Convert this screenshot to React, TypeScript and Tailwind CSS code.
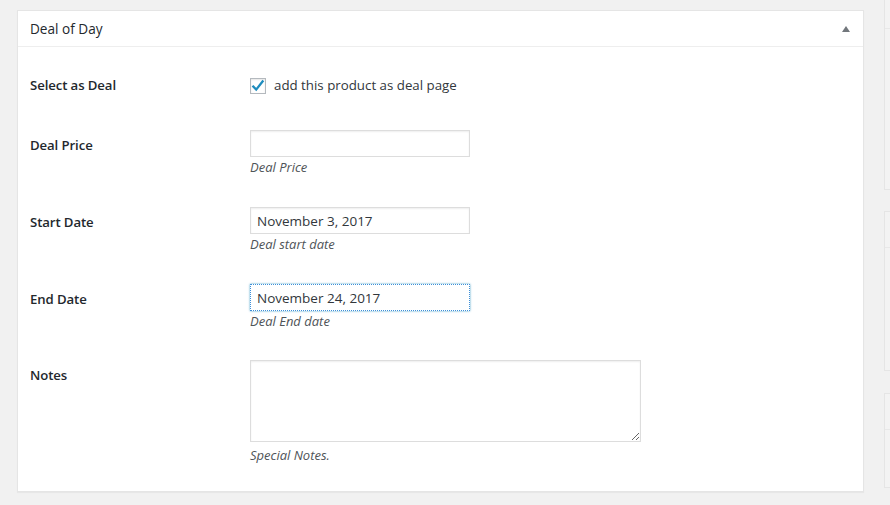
import React from "react";

const font = { fontFamily: '"Open Sans", "Noto Sans", Arial, sans-serif' };

function Row({ label, children, className = "", labelPad = "pt-[5px]" }: { label: string; children: React.ReactNode; className?: string; labelPad?: string }) {
  return (
    <div className={`flex ${className}`}>
      <div className={`w-[220px] shrink-0 text-[13.2px] tracking-[-0.1px] leading-[20px] font-semibold text-[#23282d] ${labelPad}`}>{label}</div>
      <div className="flex flex-col">{children}</div>
    </div>
  );
}

function Desc({ children, className = "" }: { children: React.ReactNode; className?: string }) {
  return <p className={`text-[13px] leading-[20px] italic text-[#4f5458] ${className}`}>{children}</p>;
}

export default function App() {
  return (
    <div style={font} className="w-[890px] h-[505px] overflow-hidden bg-[#f1f1f1] flex">
      <div className="ml-[17px] mt-[10px] w-[847px] h-[482px] shrink-0 bg-white border border-[#e5e5e5] shadow-[0_1px_1px_rgba(0,0,0,0.04)] flex flex-col">
        <div className="h-[36px] border-b border-[#eeeeee] flex items-center justify-between pl-[12px] pr-[13px] shrink-0">
          <h2 className="text-[13.6px] leading-[20px] text-[#23282d] font-normal">Deal of Day</h2>
          <svg width="8" height="6" viewBox="0 0 8 6" className="mt-[1px]">
            <path d="M4 0 L8 6 L0 6 Z" fill="#72777c" />
          </svg>
        </div>
        <div className="pl-[12px] pt-[28px] flex flex-col">
          <Row label="Select as Deal" labelPad="pt-0">
            <label className="flex items-center h-[20px] gap-[8px] text-[13.3px] text-[#32373c]">
              <span className="w-[16px] h-[16px] mt-[1px] border border-[#b4b9be] bg-white shadow-[inset_0_1px_2px_rgba(0,0,0,0.1)] flex items-center justify-center">
                <svg width="14" height="14" viewBox="0 0 14 14">
                  <path d="M2.3 7.6 L5.2 10.6 L11.6 2.4" stroke="#1e8cbe" strokeWidth="2.3" fill="none" strokeLinecap="square" />
                </svg>
              </span>
              <span className="mt-[2px]">add this product as deal page</span>
            </label>
          </Row>
          <Row label="Deal Price" className="mt-[35px]">
            <input readOnly value="" className="w-[220px] h-[27px] border border-[#dddddd] shadow-[inset_0_1px_2px_rgba(0,0,0,0.07)] px-[6px] text-[13.5px] text-[#32373c] outline-none" />
            <Desc>Deal Price</Desc>
          </Row>
          <Row label="Start Date" className="mt-[30px]">
            <input readOnly value="November 3, 2017" className="w-[220px] h-[27px] border border-[#dddddd] shadow-[inset_0_1px_2px_rgba(0,0,0,0.07)] px-[6px] text-[13.5px] text-[#32373c] outline-none" />
            <Desc>Deal start date</Desc>
          </Row>
          <Row label="End Date" className="mt-[30px]">
            <input readOnly value="November 24, 2017" className="w-[220px] h-[27px] border border-dotted border-[#3d8fd8] shadow-[0_0_2px_rgba(30,140,190,0.8)] px-[6px] text-[13.5px] text-[#32373c] outline-none" />
            <Desc>Deal End date</Desc>
          </Row>
          <Row label="Notes" className="mt-[29px]">
            <textarea readOnly className="w-[391px] h-[82px] border border-[#dddddd] shadow-[inset_0_1px_2px_rgba(0,0,0,0.07)] resize outline-none block" />
            <Desc className="mt-[3px]">Special Notes.</Desc>
          </Row>
        </div>
      </div>
      <div className="ml-[20px] w-[200px] shrink-0 flex flex-col">
        <div className="-mt-[20px] h-[210px] border border-[#e5e5e5] bg-[#f3f3f3] flex flex-col">
          <div className="h-[48px] border-b border-[#e8e8e8]" />
        </div>
        <div className="mt-[21px] h-[160px] border border-[#e5e5e5] bg-[#f3f3f3] flex flex-col">
          <div className="h-[36px] border-b border-[#e8e8e8]" />
        </div>
        <div className="mt-[22px] h-[95px] border border-[#e5e5e5] bg-[#f3f3f3] flex flex-col">
          <div className="h-[36px] border-b border-[#e8e8e8]" />
        </div>
      </div>
    </div>
  );
}
